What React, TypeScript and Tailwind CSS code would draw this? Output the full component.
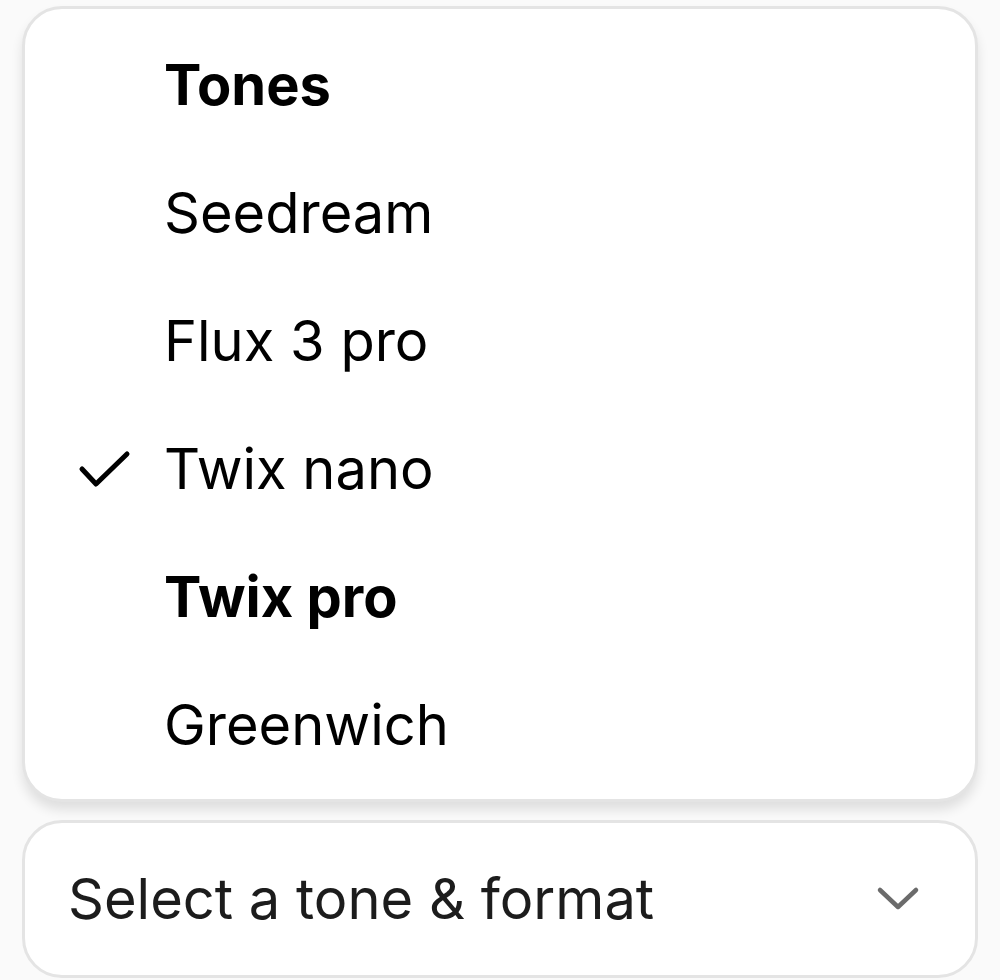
import React from "react";

const items = [
  { label: "Tones", bold: true },
  { label: "Seedream" },
  { label: "Flux 3 pro" },
  { label: "Twix nano", checked: true },
  { label: "Twix pro", bold: true },
  { label: "Greenwich" },
];

const Check = () => (
  <svg width="53" height="38" viewBox="0 0 53 38" fill="none">
    <polyline points="4,19 18,34 49,4" stroke="#000" strokeWidth="5" strokeLinecap="round" strokeLinejoin="round" />
  </svg>
);

const Chevron = () => (
  <svg width="44" height="26" viewBox="0 0 44 26" fill="none">
    <polyline points="4,4 22,21 40,4" stroke="#6b6b6b" strokeWidth="4.5" strokeLinecap="round" strokeLinejoin="round" />
  </svg>
);

export default function App() {
  return (
    <div
      className="w-[1000px] h-[980px] bg-[#fafafa] px-[22px] pt-[6px] flex flex-col gap-[18px]"
      style={{ fontFamily: "Inter, 'Noto Sans', sans-serif" }}
    >
      {/* menu */}
      <div className="rounded-[40px] border-[3px] border-[#e4e4e4] bg-white pt-[12px] pb-[10px] shadow-[0_8px_12px_rgba(0,0,0,0.11)]">
        {items.map((it) => (
          <div key={it.label} className="h-[128px] flex items-center">
            <div className="w-[139px] pl-[53px] flex items-center">
              {it.checked && <Check />}
            </div>
            <span className={`text-[56px] leading-none text-black ${it.bold ? "font-bold" : "font-normal"}`}>
              {it.label}
            </span>
          </div>
        ))}
      </div>

      {/* trigger */}
      <div className="h-[158px] rounded-[40px] border-[3px] border-[#e4e4e4] bg-white flex items-center justify-between pl-[43px] pr-[55px]">
        <span className="text-[56px] leading-none text-[#1c1c1c]">Select a tone &amp; format</span>
        <Chevron />
      </div>
    </div>
  );
}
